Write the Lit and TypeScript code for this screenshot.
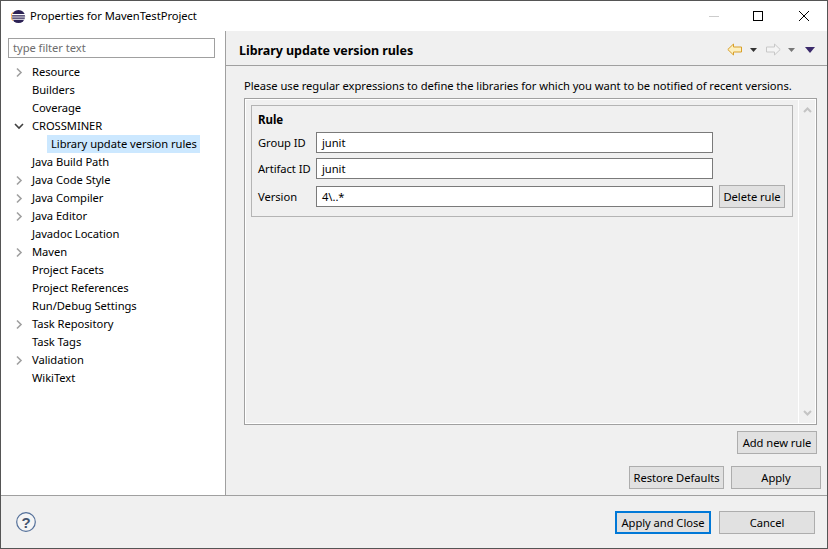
import { LitElement, html, css, svg } from 'lit';
import { customElement } from 'lit/decorators.js';

const TREE = [
  { label: 'Resource', arrow: 'right' },
  { label: 'Builders' },
  { label: 'Coverage' },
  { label: 'CROSSMINER', arrow: 'down' },
  { label: 'Library update version rules', child: true },
  { label: 'Java Build Path' },
  { label: 'Java Code Style', arrow: 'right' },
  { label: 'Java Compiler', arrow: 'right' },
  { label: 'Java Editor', arrow: 'right' },
  { label: 'Javadoc Location' },
  { label: 'Maven', arrow: 'right' },
  { label: 'Project Facets' },
  { label: 'Project References' },
  { label: 'Run/Debug Settings' },
  { label: 'Task Repository', arrow: 'right' },
  { label: 'Task Tags' },
  { label: 'Validation', arrow: 'right' },
  { label: 'WikiText' },
];

const FIELDS = [
  { label: 'Group ID', value: 'junit' },
  { label: 'Artifact ID', value: 'junit' },
];

const arrowRight = svg`<path d="M3 1.500 7 5.500 3 9.500" fill="none" stroke="#a0a0a0" stroke-width="1.600"/>`;
const arrowDown = svg`<path d="M1 3 5 7 9 3" fill="none" stroke="#404040" stroke-width="1.600"/>`;

@customElement('app-root')
export class AppRoot extends LitElement {
  static override styles = css`
    :host {
      display: block;
      width: 828px;
      height: 549px;
      font-family: 'Noto Sans', sans-serif;
      font-size: 11.2px;
      letter-spacing: -0.05px;
      color: #000;
    }

    .window {
      box-sizing: border-box;
      width: 828px;
      height: 549px;
      border: 1px solid #555;
      display: flex;
      flex-direction: column;
      background: #f0f0f0;
    }

    .titlebar {
      flex: none;
      height: 30px;
      background: #fff;
      display: flex;
      align-items: center;
      padding: 0 1px 0 10px;
    }

    .titlebar .name {
      flex: 1;
      margin-left: 4px;
      padding-bottom: 1px;
    }

    .winbtn {
      width: 45px;
      height: 30px;
      display: flex;
      align-items: center;
      justify-content: center;
    }

    .winbtn.max {
      padding-right: 2px;
      box-sizing: border-box;
    }

    .main {
      flex: 1;
      display: flex;
      min-height: 0;
    }

    .side {
      flex: none;
      width: 217px;
      background: #fff;
      border-right: 1px solid #a0a0a0;
      padding: 7px 0 0 7px;
    }

    .filter {
      box-sizing: border-box;
      width: 207px;
      height: 20px;
      border: 1px solid #a0a0a0;
      padding-left: 4px;
      color: #6d6d6d;
      line-height: 18px;
    }

    .tree {
      margin-top: 5px;
    }

    .row {
      height: 18px;
      line-height: 18px;
      display: flex;
      align-items: center;
      white-space: nowrap;
    }

    .twist {
      flex: none;
      width: 24px;
      display: flex;
      justify-content: center;
      padding-right: 3px;
      box-sizing: border-box;
    }

    .row.child {
      padding-left: 15px;
    }

    .sel {
      background: #cce8ff;
      padding: 0 4px;
      width: 145px;
    }

    .pane {
      flex: 1;
      display: flex;
      flex-direction: column;
      min-width: 0;
    }

    .head {
      flex: none;
      box-sizing: border-box;
      height: 35px;
      display: flex;
      align-items: center;
      justify-content: space-between;
      padding: 5px 12px 0 13px;
      border-bottom: 1px solid #a0a0a0;
    }

    .head h1 {
      margin: 0;
      font-size: 12.5px;
      font-weight: 700;
    }

    .nav {
      display: flex;
      align-items: center;
      margin-top: -2px;
    }

    .nav .dd {
      margin: 0 8px 0 7px;
    }

    .nav .menu {
      margin-left: 2px;
    }

    .body {
      flex: 1;
      padding: 11px 10px 0 18px;
      display: flex;
      flex-direction: column;
      min-height: 0;
    }

    .desc {
      line-height: 18px;
      white-space: nowrap;
    }

    .scroller {
      margin-top: 3px;
      height: 327px;
      box-sizing: border-box;
      border: 1px solid #a0a0a0;
      box-shadow: inset 0 0 0 1px #fff;
      display: flex;
      padding: 6px 0 0 6px;
    }

    .group {
      box-sizing: border-box;
      width: 542px;
      height: 112px;
      border: 1px solid #b4b4b4;
      padding: 5px 7px 0 6px;
    }

    .group h2 {
      margin: 0 0 3px;
      font-size: 11.5px;
      font-weight: 700;
      line-height: 18px;
    }

    .field {
      display: flex;
      align-items: center;
      gap: 6px;
      margin-bottom: 5px;
    }

    .field label {
      flex: none;
      width: 52px;
      white-space: nowrap;
    }

    .input {
      flex: none;
      box-sizing: border-box;
      width: 397px;
      height: 21px;
      border: 1px solid #7a7a7a;
      background: #fff;
      padding-left: 5px;
      line-height: 19px;
    }

    .field.last {
      margin-top: 6px;
    }

    .bar {
      flex: 1;
      display: flex;
      flex-direction: column;
      justify-content: space-between;
      align-items: center;
      padding: 1px 1px 6px 0;
      margin: -6px 0 1px 5px;
      border-left: 1px solid #fff;
    }

    .bar svg:first-child {
      margin-top: 6px;
    }

    button {
      box-sizing: border-box;
      height: 23px;
      padding: 0;
      font: inherit;
      letter-spacing: inherit;
      color: inherit;
      background: #e1e1e1;
      border: 1px solid #adadad;
      white-space: nowrap;
    }

    .add {
      align-self: flex-end;
      width: 80px;
      margin-top: 6px;
    }

    .actions {
      margin-top: 12px;
      display: flex;
      justify-content: flex-end;
      gap: 7px;
      margin-right: -4px;
    }

    .footer {
      flex: none;
      height: 52px;
      border-top: 1px solid #a0a0a0;
      display: flex;
      align-items: center;
      justify-content: space-between;
      padding: 0 12px 0 15px;
    }

    .footer .btns {
      display: flex;
      gap: 8px;
    }

    .primary {
      border: 2px solid #0078d7;
    }

    .help-mark {
      font-family: 'Liberation Sans', sans-serif;
      font-size: 15px;
      font-weight: 700;
      fill: #44546f;
      letter-spacing: 0;
    }
  `;

  override render() {
    return html`
      <div class="window">
        <div class="titlebar">
          <svg width="15" height="15" viewBox="0 0 16 16">
            <circle cx="8" cy="8" r="7" fill="#2c2255" />
            <path d="M1 6h14M1 8.500h14M1.500 11h13" stroke="#fff" stroke-width="1.100" />
            <path d="M2 3.500A7 7 0 0 0 2 12.500" fill="none" stroke="#f7941e" stroke-width="1" />
          </svg>
          <span class="name">Properties for MavenTestProject</span>
          <div class="winbtn">
            <svg width="10" height="10"><path d="M0 5.500h10" stroke="#ccc" /></svg>
          </div>
          <div class="winbtn max">
            <svg width="10" height="10"><rect x=".5" y=".5" width="9" height="9" fill="none" stroke="#000" /></svg>
          </div>
          <div class="winbtn">
            <svg width="10" height="10"><path d="M0 0l10 10M10 0L0 10" stroke="#000" /></svg>
          </div>
        </div>
        <div class="main">
          <div class="side">
            <div class="filter">type filter text</div>
            <div class="tree">
              ${TREE.map((t) =>
                t.child
                  ? html`<div class="row child"><span class="twist"></span><span class="sel">${t.label}</span></div>`
                  : html`<div class="row">
                      <span class="twist">
                        ${t.arrow
                          ? html`<svg width="10" height="11">${t.arrow === 'down' ? arrowDown : arrowRight}</svg>`
                          : ''}
                      </span>
                      <span>${t.label}</span>
                    </div>`
              )}
            </div>
          </div>
          <div class="pane">
            <div class="head">
              <h1>Library update version rules</h1>
              <div class="nav">
                <svg width="16" height="13" viewBox="0 0 16 13">
                  <path d="M.8 6.500 6.500 1V4h8v5h-8v3z" fill="#fdf0c0" stroke="#d9a02a" />
                </svg>
                <svg class="dd" width="7" height="4"><path d="M0 0h7L3.500 4z" fill="#333" /></svg>
                <svg width="16" height="13" viewBox="0 0 16 13">
                  <path d="M15.200 6.500 9.500 1V4h-8v5h8v3z" fill="#f4f4f4" stroke="#c8c8c8" />
                </svg>
                <svg class="dd" width="7" height="4"><path d="M0 0h7L3.500 4z" fill="#777" /></svg>
                <svg class="menu" width="10" height="6"><path d="M0 0h10L5 6z" fill="#3b2a6b" /></svg>
              </div>
            </div>
            <div class="body">
              <div class="desc">Please use regular expressions to define the libraries for which you want to be notified of recent versions.</div>
              <div class="scroller">
                <div class="group">
                  <h2>Rule</h2>
                  ${FIELDS.map(
                    (f) => html`<div class="field">
                      <label>${f.label}</label>
                      <div class="input">${f.value}</div>
                    </div>`
                  )}
                  <div class="field last">
                    <label>Version</label>
                    <div class="input">4\\..*</div>
                    <button style="width:66px">Delete rule</button>
                  </div>
                </div>
                <div class="bar">
                  <svg width="9" height="7"><path d="M1 6l3.500-3.500L8 6" fill="none" stroke="#c4c4c4" stroke-width="2" /></svg>
                  <svg width="9" height="7"><path d="M1 1l3.500 3.500L8 1" fill="none" stroke="#c4c4c4" stroke-width="2" /></svg>
                </div>
              </div>
              <button class="add">Add new rule</button>
              <div class="actions">
                <button style="width:95px">Restore Defaults</button>
                <button style="width:90px">Apply</button>
              </div>
            </div>
          </div>
        </div>
        <div class="footer">
          <svg width="20" height="20" viewBox="0 0 20 20">
            <circle cx="10" cy="10" r="9.300" fill="#f5f5f5" stroke="#54709a" stroke-width="1.200" />
            <text class="help-mark" x="10" y="15.500" text-anchor="middle">?</text>
          </svg>
          <div class="btns">
            <button class="primary" style="width:96px">Apply and Close</button>
            <button style="width:96px">Cancel</button>
          </div>
        </div>
      </div>
    `;
  }
}

declare global {
  interface HTMLElementTagNameMap {
    'app-root': AppRoot;
  }
}
